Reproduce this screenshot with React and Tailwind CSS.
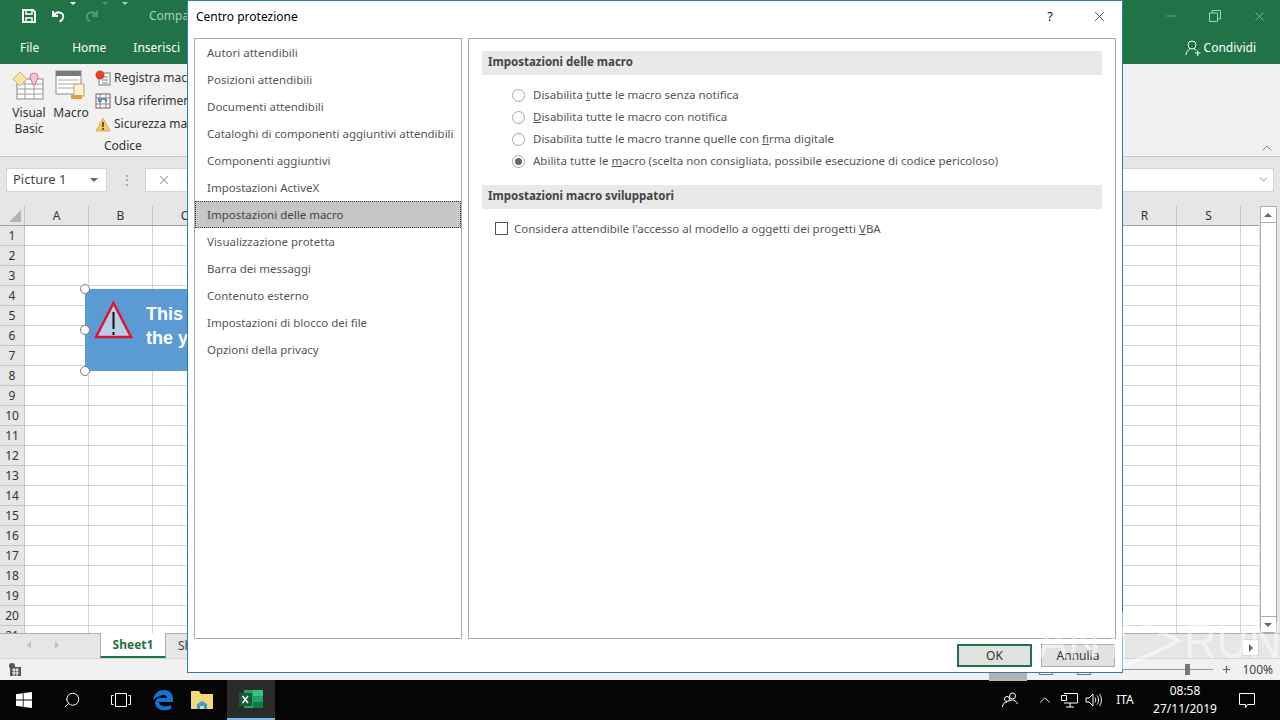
import { Check, ChevronDown, ChevronUp, Minus, Plus, Search, X } from "lucide-react";

const cols = "ABCDEFGHIJKLMNOPQRS".split("");
const rows = Array.from({ length: 21 }, (_, i) => i + 1);

const navItems = [
  "Autori attendibili",
  "Posizioni attendibili",
  "Documenti attendibili",
  "Cataloghi di componenti aggiuntivi attendibili",
  "Componenti aggiuntivi",
  "Impostazioni ActiveX",
  "Impostazioni delle macro",
  "Visualizzazione protetta",
  "Barra dei messaggi",
  "Contenuto esterno",
  "Impostazioni di blocco dei file",
  "Opzioni della privacy",
];

function SaveIcon() {
  return (
    <svg width="16" height="16" viewBox="0 0 16 16" fill="none" stroke="#fff" strokeWidth="2">
      <path d="M2 2h10l2 2v10H2z" />
      <path d="M5 2v4h6V2M5 14v-4h6v4" strokeWidth="1.5" />
    </svg>
  );
}

function UndoIcon({ color, flip }) {
  return (
    <svg width="16" height="16" viewBox="0 0 16 16" fill="none" stroke={color} strokeWidth="2" className={flip ? "-scale-x-100" : ""}>
      <path d="M2 3v5h5" />
      <path d="M2.5 8C4 5 6 4 8.5 4.500 11.500 5 13 7.500 12 10c-.5 1.500-2 3-3.500 3.500" />
    </svg>
  );
}

function Caret({ color = "#fff" }) {
  return <span className="w-0 h-0 border-x-[3px] border-x-transparent border-t-[3px]" style={{ borderTopColor: color }} />;
}

function VbaIcon() {
  return (
    <svg width="34" height="30" viewBox="0 0 34 30">
      <rect x="5" y="9" width="26" height="20" fill="#fff" stroke="#8a8a8a" />
      <path d="M5 14h26M5 19h26M5 24h26M13 9v20M22 9v20" stroke="#9a9a9a" />
      <path d="M1 9l7-7 7 7-7 7z" fill="#f7e3a6" stroke="#e0b060" />
      <path d="M18 7a4 4 0 018 0l-3 8h-2z" fill="#f4c4d8" stroke="#d86a9a" />
    </svg>
  );
}

function MacroIcon() {
  return (
    <svg width="32" height="30" viewBox="0 0 32 30">
      <rect x="1" y="1" width="25" height="23" fill="#fff" stroke="#8a8a8a" />
      <rect x="1" y="1" width="25" height="5" fill="#7a7a7a" />
      <path d="M3 10h21M3 14h21M3 18h21" stroke="#a8a8a8" />
      <rect x="19" y="14" width="10" height="12" fill="#fdf2dc" stroke="#d89a4a" />
      <rect x="16" y="25" width="11" height="4" fill="#e49a3e" />
    </svg>
  );
}

function RecordIcon() {
  return (
    <svg width="16" height="16" viewBox="0 0 16 16">
      <rect x="4" y="3" width="11" height="12" fill="#fff" stroke="#777" />
      <path d="M7 7h6M7 10h6M7 13h6" stroke="#777" />
      <circle cx="5" cy="5" r="4.500" fill="#d9442a" />
    </svg>
  );
}

function RefIcon() {
  return (
    <svg width="16" height="16" viewBox="0 0 16 16" fill="none">
      <rect x="1" y="1" width="14" height="14" fill="#fff" stroke="#7a5a5a" />
      <path d="M1 5h14M1 11h14M5 1v14M11 1v14" stroke="#8f7a7a" />
      <path d="M4 8c2-3 6-3 8 0" stroke="#2b7cc0" strokeWidth="1.500" />
      <path d="M3 5l1 4 3-1" stroke="#2b7cc0" />
    </svg>
  );
}

function WarnIcon() {
  return (
    <svg width="16" height="15" viewBox="0 0 16 15">
      <path d="M8 1l7 13H1z" fill="#f4c56a" stroke="#e8b04c" />
      <path d="M8 5v5M8 11v2" stroke="#333" strokeWidth="1.500" />
    </svg>
  );
}

function Handle({ className }) {
  return <span className={`absolute w-[10px] h-[10px] rounded-full bg-white border-[1.5px] border-[#7f7f7f] ${className}`} />;
}

function Sheet() {
  return (
    <div className="relative flex-1 min-h-0 flex bg-[#e6e6e6] overflow-hidden">
      <div className="flex-1 min-w-0 flex flex-col pt-[3px]">
        <div className="flex h-[20px] bg-[#e6e6e6] border-b border-[#9f9f9f] shrink-0">
          <div className="w-[25px] border-r border-[#c6c6c6] flex items-end justify-end pr-[3px] pb-[3px]">
            <span className="w-0 h-0 border-l-[12px] border-l-transparent border-b-[12px] border-b-[#b4b4b4]" />
          </div>
          {cols.map((c) => (
            <div key={c} className="w-[64px] shrink-0 border-r border-[#c6c6c6] text-center text-[12px] leading-[20px] text-[#333]">
              {c}
            </div>
          ))}
        </div>
        {rows.map((r) => (
          <div key={r} className="flex h-[20px] shrink-0 bg-white">
            <div className="w-[25px] bg-[#e6e6e6] border-r border-b border-[#c6c6c6] text-center text-[12px] leading-[19px] text-[#333]">{r}</div>
            {cols.map((c) => (
              <div key={c} className="w-[64px] shrink-0 border-r border-b border-[#d4d4d4]" />
            ))}
            <div className="flex-1 border-b border-[#d4d4d4]" />
          </div>
        ))}
      </div>
      <div className="w-[21px] shrink-0 flex flex-col items-center pt-[3px] pr-[3px]">
        <div className="w-[17px] h-[17px] bg-white border border-[#ababab] flex items-center justify-center">
          <span className="w-0 h-0 border-x-[4px] border-x-transparent border-b-[4px] border-b-[#666]" />
        </div>
        <div className="w-[17px] flex-1 bg-white border-x border-[#ababab]" />
        <div className="w-[17px] h-[17px] bg-white border border-[#ababab] flex items-center justify-center">
          <span className="w-0 h-0 border-x-[4px] border-x-transparent border-t-[4px] border-t-[#666]" />
        </div>
      </div>

      {/* immagine selezionata nel foglio */}
      <div className="absolute left-[85px] top-[86px] w-[400px] h-[82px] bg-[#5b9bd5]">
        <svg width="40" height="40" viewBox="0 0 40 40" className="absolute left-[9px] top-[12px]">
          <path d="M19.500 2L37 36H2z" fill="#b5cfe8" stroke="#e3132c" strokeWidth="2.500" />
          <path d="M19.500 11v17M19.500 31v3" stroke="#111" strokeWidth="2" />
        </svg>
        <p className="absolute left-[61px] top-[13px] font-['Liberation_Sans',sans-serif] font-bold text-[18px] leading-[24px] text-white whitespace-nowrap">
          This document
          <br />
          the yellow bar
        </p>
      </div>
      <Handle className="left-[80px] top-[81px]" />
      <Handle className="left-[80px] top-[122px]" />
      <Handle className="left-[80px] top-[163px]" />
    </div>
  );
}

function Excel() {
  return (
    <div className="flex-1 min-h-0 flex flex-col bg-[#f1f1f1]">
      <div className="h-[64px] shrink-0 bg-[#217346] text-white flex flex-col">
        <div className="h-[32px] flex items-center pl-[21px] pr-[13px]">
          <SaveIcon />
          <span className="ml-[14px]"><UndoIcon color="#fff" /></span>
          <span className="ml-[3px]"><Caret /></span>
          <span className="ml-[7px]"><UndoIcon color="#4f9a72" flip /></span>
          <span className="ml-[3px]"><Caret color="#4f9a72" /></span>
          <span className="ml-[14px]"><Caret color="#a9d0ba" /></span>
          <span className="ml-[21px] text-[12px] text-[#a9d0ba]">Compa</span>
          <div className="ml-auto flex items-center gap-[31px] text-[#a9d0ba]">
            <Minus size={14} strokeWidth={1} />
            <svg width="12" height="12" viewBox="0 0 12 12" fill="none" stroke="currentColor">
              <path d="M.5 3h8v8.500h-8zM3 3V.5h8.500V9H8.500" />
            </svg>
            <X size={15} strokeWidth={1} />
          </div>
        </div>
        <div className="h-[32px] flex items-center text-[12px]">
          <span className="ml-[20px]">File</span>
          <span className="ml-[33px]">Home</span>
          <span className="ml-[27px]">Inserisci</span>
          <div className="ml-auto mr-[24px] flex items-center gap-[3px]">
            <svg width="16" height="16" viewBox="0 0 16 16" fill="none" stroke="#fff">
              <circle cx="7" cy="5" r="4" />
              <path d="M1 15c0-3 2-5 4-6M9 9l2 1M10 13h5.500M12.700 10.500v5.500" />
            </svg>
            <span>Condividi</span>
          </div>
        </div>
      </div>

      <div className="h-[93px] shrink-0 border-b border-[#c6c6c6] flex justify-between relative">
        <div className="flex text-[12px] text-[#333]">
          <div className="w-[58px] flex flex-col items-center pt-[6px] ml-[0px]">
            <VbaIcon />
            <span className="leading-[16px] text-center mt-[5px]">Visual<br />Basic</span>
          </div>
          <div className="w-[26px] flex flex-col items-center pt-[6px]">
            <MacroIcon />
            <span className="leading-[16px] mt-[5px]">Macro</span>
          </div>
          <div className="ml-[11px] flex flex-col gap-[7px] pt-[6px] whitespace-nowrap">
            <div className="flex items-center gap-[3px] h-[16px]"><RecordIcon />Registra macro</div>
            <div className="flex items-center gap-[3px] h-[16px]"><RefIcon />Usa riferimenti relativi</div>
            <div className="flex items-center gap-[3px] h-[16px]"><WarnIcon />Sicurezza macro</div>
          </div>
        </div>
        <span className="absolute left-[104px] bottom-[1px] text-[12px] text-[#333]">Codice</span>
        <ChevronUp size={16} strokeWidth={1} className="absolute right-[5px] bottom-[0px] text-[#444]" />
      </div>

      <div className="h-[46px] shrink-0 bg-[#e6e6e6] flex items-center pl-[6px] pr-[6px] pb-[1px]">
        <div className="w-[101px] h-[24px] bg-white border border-[#d4d4d4] flex items-center justify-between pl-[6px] pr-[8px] text-[13px] text-[#444]">
          Picture 1
          <span className="w-0 h-0 border-x-[4px] border-x-transparent border-t-[4px] border-t-[#666]" />
        </div>
        <span className="ml-[14px] text-[#888] text-[12px] leading-none">⋮</span>
        <div className="ml-[12px] flex-1 h-[24px] bg-white border border-[#d4d4d4] flex items-center justify-between pl-[11px] pr-[3px]">
          <X size={14} className="text-[#b0b0b0]" />
          <ChevronDown size={13} className="text-[#b5b5b5]" />
        </div>
      </div>

      <Sheet />

      <div className="h-[25px] shrink-0 flex items-stretch bg-[#e6e6e6] border-t border-[#ababab] relative">
        <div className="flex items-center w-[100px] pl-[27px] gap-[24px] pb-[3px]">
          <span className="w-0 h-0 border-y-[4px] border-y-transparent border-r-[4px] border-r-[#c0c0c0]" />
          <span className="w-0 h-0 border-y-[4px] border-y-transparent border-l-[4px] border-l-[#c0c0c0]" />
        </div>
        <div className="w-[66px] -mt-px h-[25px] bg-white border-x border-[#ababab] border-b-2 border-b-[#217346] text-center text-[#217346] font-bold text-[12px] leading-[24px]">
          Sheet1
        </div>
        <span className="ml-[12px] text-[12px] leading-[24px] text-[#444]">Sheet2</span>
        <div className="absolute right-[21px] top-[5px] w-[17px] h-[17px] bg-white border border-[#d4d4d4] flex items-center justify-center">
          <span className="w-0 h-0 border-y-[4px] border-y-transparent border-l-[4px] border-l-[#666]" />
        </div>
      </div>

      <div className="h-[22px] shrink-0 bg-[#f1f1f1] border-t border-[#d4d4d4] flex items-center relative text-[12px] text-[#444]">
        <svg width="14" height="14" viewBox="0 0 14 14" className="ml-[8px]">
          <circle cx="4" cy="3" r="3" fill="#555" />
          <rect x="2" y="4" width="11" height="9" fill="#555" />
          <path d="M4 7h7M4 10h7M6 5v8M9 5v8" stroke="#fff" />
        </svg>
        <div className="ml-auto flex items-center mr-[7px]">
          <div className="w-[38px] h-[22px] bg-[#b4b4b4] mr-[12px]" />
          <div className="w-[14px] h-[10px] border border-[#777] mr-[24px]" />
          <div className="w-[14px] h-[10px] border border-[#777] mr-[22px]" />
          <div className="relative w-[100px] h-px bg-[#999] mr-[8px]">
            <span className="absolute left-[72px] -top-[5px] w-[5px] h-[11px] bg-[#777]" />
          </div>
          <Plus size={11} strokeWidth={2.500} className="text-[#666] mr-[10px]" />
          <span>100%</span>
        </div>
      </div>
    </div>
  );
}

function Radio({ checked, children }) {
  return (
    <div className="flex items-center h-[22px]">
      <span className="w-[13px] h-[13px] rounded-full border border-[#a6a6a6] bg-white flex items-center justify-center">
        {checked && <span className="w-[7px] h-[7px] rounded-full bg-[#666]" />}
      </span>
      <span className="ml-[8px]">{children}</span>
    </div>
  );
}

function SectionHeader({ children }) {
  return <div className="h-[24px] bg-[#e9e9e9] pl-[6px] font-bold leading-[22px] text-[#444]">{children}</div>;
}

function Dialog() {
  return (
    <div className="absolute left-[187px] top-0 w-[936px] h-[673px] bg-white border border-[#2b7cb0] flex flex-col font-['Noto_Sans',sans-serif] text-[11.5px] text-[#555]">
      <div className="h-[37px] shrink-0 flex items-center pl-[8px] pb-[6px] text-black text-[12px]">
        Centro protezione
        <span className="ml-auto mr-[38px] text-[13px] text-[#222]">?</span>
        <X size={17} strokeWidth={1} className="mr-[14px] text-[#222]" />
      </div>
      <div className="flex-1 min-h-0 flex gap-[6px] px-[6px]">
        <div className="w-[268px] shrink-0 border border-[#ababab]">
          {navItems.map((t) => (
            <div
              key={t}
              className={
                t === "Impostazioni delle macro"
                  ? "h-[27px] pl-[11px] leading-[25px] bg-[#c6c6c6] border border-dotted border-[#333] text-[#444]"
                  : "h-[27px] pl-[11px] leading-[26px] border border-transparent whitespace-nowrap"
              }
            >
              {t}
            </div>
          ))}
        </div>
        <div className="flex-1 border border-[#ababab] pt-[12px] pl-[13px] pr-[13px]">
          <SectionHeader>Impostazioni delle macro</SectionHeader>
          <div className="pl-[30px] pt-[9px] pb-[13px]">
            <Radio>Disabilita <u>t</u>utte le macro senza notifica</Radio>
            <Radio><u>D</u>isabilita tutte le macro con notifica</Radio>
            <Radio>Disabilita tutte le macro tranne quelle con <u>f</u>irma digitale</Radio>
            <Radio checked>Abilita tutte le <u>m</u>acro (scelta non consigliata, possibile esecuzione di codice pericoloso)</Radio>
          </div>
          <SectionHeader>Impostazioni macro sviluppatori</SectionHeader>
          <div className="flex items-center pl-[13px] mt-[11px]">
            <span className="w-[13px] h-[13px] border border-[#555] bg-white" />
            <span className="ml-[6px]">Considera attendibile l'accesso al modello a oggetti dei progetti <u>V</u>BA</span>
          </div>
        </div>
      </div>
      <div className="h-[33px] shrink-0 flex items-center justify-end gap-[9px] pr-[7px] text-[12px] text-[#333]">
        <button className="w-[75px] h-[23px] bg-[#e1e1e1] border-2 border-[#217346]">OK</button>
        <button className="w-[74px] h-[23px] bg-[#e1e1e1] border border-[#ababab]">Annulla</button>
      </div>
    </div>
  );
}

function Watermark() {
  return (
    <div className="absolute left-[1038px] top-[612px] h-[58px] flex items-center text-white/50 font-['Liberation_Sans',sans-serif] text-[50px] leading-none font-light pointer-events-none">
      <span className="scale-x-90 origin-left w-[82px]">ANY</span>
      <svg width="62" height="58" viewBox="0 0 62 58" fill="none" stroke="currentColor" strokeWidth="4">
        <path d="M3 3v52l56-26z" />
      </svg>
      <span className="scale-x-90 origin-left ml-[2px]">RUN</span>
    </div>
  );
}

function Taskbar() {
  return (
    <div className="h-[40px] shrink-0 bg-[#050505] flex items-center text-white text-[12px]">
      <svg width="16" height="16" viewBox="0 0 16 16" fill="#fff" className="ml-[16px]">
        <path d="M0 2.300l6.800-1v6.300H0zM7.600 1.100L16 0v7.600H7.600zM0 8.400h6.800v6.300l-6.800-1zM7.600 8.400H16V16l-8.400-1.100z" />
      </svg>
      <Search size={18} strokeWidth={1.300} className="ml-[31px] -scale-x-100" />
      <svg width="20" height="14" viewBox="0 0 20 14" fill="none" stroke="#fff" className="ml-[30px]">
        <path d="M4.500.5h11v13h-11zM2.500 2.500H.5v9h2M17.500 2.500h2v9h-2" />
      </svg>
      <svg width="22" height="22" viewBox="0 0 22 22" className="ml-[21px]">
        <path d="M1 11C2 4 7 1 12 1c6 0 9 4 9 10v2H7c0 4 6 6 12 3v4c-7 3-15 1-16-6 0-1 1-3 3-5 2-1 3-2 3-2-3 0-6 2-8 4zM7 9h8c0-4-7-4-8 0z" fill="#1273d1" />
      </svg>
      <svg width="24" height="22" viewBox="0 0 24 22" className="ml-[16px]">
        <path d="M1 2h8l2 3h12v15H1z" fill="#f5d77b" />
        <path d="M7 20v-5l5-3 5 3v5h-3v-3h-4v3z" fill="#3c9ae0" />
      </svg>
      <div className="ml-[13px] w-[48px] h-[40px] bg-[#2b2b2b] border-b-2 border-[#76b9ed] flex items-center justify-center">
        <svg width="26" height="20" viewBox="0 0 26 20">
          <rect x="6" y="1" width="19" height="18" fill="#21a366" />
          <rect x="15" y="1" width="10" height="6" fill="#33c481" />
          <rect x="15" y="13" width="10" height="6" fill="#107c41" />
          <rect x="1" y="4" width="13" height="13" fill="#185c37" />
          <path d="M4.500 7l5.500 7M10 7l-5.500 7" stroke="#fff" strokeWidth="1.500" />
        </svg>
      </div>
      <div className="ml-auto flex items-center">
        <svg width="18" height="18" viewBox="0 0 18 18" fill="none" stroke="#fff">
          <circle cx="11.500" cy="5" r="3" />
          <circle cx="6" cy="8" r="2.500" />
          <path d="M1.500 16c0-3 2-5 4.500-5M8 10c3-2 7-1 8.500 3" />
        </svg>
        <ChevronUp size={18} strokeWidth={1.200} className="ml-[17px]" />
        <svg width="17" height="15" viewBox="0 0 17 15" fill="none" stroke="#fff" className="ml-[7px]">
          <path d="M.5 2.500h5v5h-5zM3 .5h13.500v9.500H3M9 10v4M5 14h8" />
        </svg>
        <svg width="17" height="14" viewBox="0 0 17 14" fill="none" stroke="#fff" className="ml-[7px]">
          <path d="M1 5h3l4-4v12L4 9H1zM10 4.500c1 1.500 1 3.500 0 5M12 2.500c2 2.500 2 6.500 0 9M14.500 1c2.500 3.500 2.500 8.500 0 12" />
        </svg>
        <span className="ml-[13px] w-[20px] text-center">ITA</span>
        <div className="ml-[13px] w-[74px] text-center leading-[18px]">
          08:58
          <br />
          27/11/2019
        </div>
        <svg width="18" height="18" viewBox="0 0 18 18" fill="none" stroke="#fff" className="ml-[16px] mr-[24px]">
          <path d="M1.500 2.500h15v11H9.500l-2 3v-3h-6z" />
        </svg>
      </div>
    </div>
  );
}

export default function App() {
  return (
    <div className="relative w-[1280px] h-[720px] overflow-hidden flex flex-col font-['Noto_Sans',sans-serif]">
      <Excel />
      <Taskbar />
      <Dialog />
      <Watermark />
    </div>
  );
}
